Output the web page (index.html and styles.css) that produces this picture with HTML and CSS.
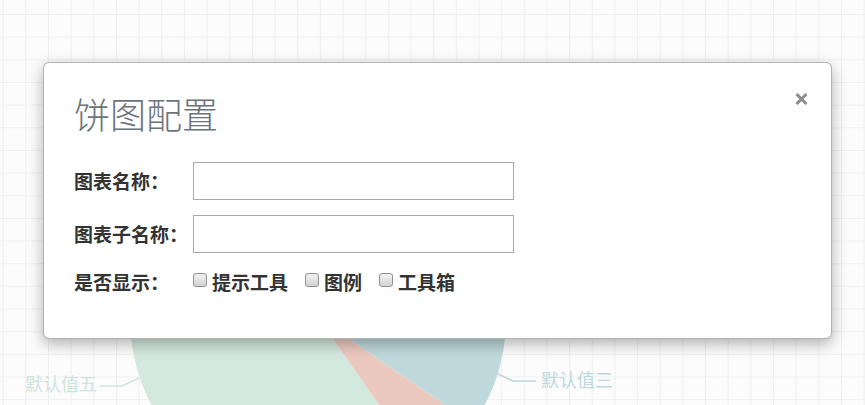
FILE: index.html
```html
<!DOCTYPE html>
<html lang="zh-CN">
<head>
    <meta charset="UTF-8">
    <meta name="viewport" content="width=device-width, initial-scale=1.0">
    <title>饼图配置</title>
    <link rel="stylesheet" href="styles.css">
</head>
<body>
    <div class="page">
        <!-- 背景中的饼图 -->
        <svg class="chart" width="865" height="405" viewBox="0 0 865 405">
            <path class="slice-blue" d="M318,318 L506,318 A188,188 0 0,1 473.2,424.1 Z"/>
            <path class="slice-red" d="M318,318 L473.2,424.1 A188,188 0 0,1 426,471.9 Z"/>
            <path class="slice-green" d="M318,318 L426,471.9 A188,188 0 1,1 311.4,130.1 Z"/>
            <path class="slice-other" d="M318,318 L311.4,130.1 A188,188 0 0,1 506,318 Z"/>
            <polyline class="line-green" points="139,378 122,386 100,386"/>
            <polyline class="line-blue" points="496,373 513,381 536,381"/>
            <text class="label-green" x="97" y="391" text-anchor="end">默认值五</text>
            <text class="label-blue" x="541" y="387">默认值三</text>
        </svg>

        <div class="modal">
            <div class="modal-header">
                <h3 class="modal-title">饼图配置</h3>
                <button class="close" type="button" aria-label="关闭">
                    <svg width="13" height="12" viewBox="0 0 13 12">
                        <path d="M1.5,1 L11.5,11 M11.5,1 L1.5,11"/>
                    </svg>
                </button>
            </div>
            <form class="modal-body" action="#">
                <div class="row">
                    <label class="label" for="title">图表名称：</label>
                    <input class="field" type="text" id="title">
                </div>
                <div class="row">
                    <label class="label" for="subtitle">图表子名称：</label>
                    <input class="field" type="text" id="subtitle">
                </div>
                <div class="row row-check">
                    <span class="label">是否显示：</span>
                    <label class="check"><input type="checkbox"><span>提示工具</span></label>
                    <label class="check"><input type="checkbox"><span>图例</span></label>
                    <label class="check"><input type="checkbox"><span>工具箱</span></label>
                </div>
            </form>
        </div>
    </div>
</body>
</html>
```

FILE: styles.css
```css
* {
    box-sizing: border-box;
    margin: 0;
}
body {
    width: 865px;
    height: 405px;
    overflow: hidden;
    background-color: #fcfcfc;
    background-image:
        linear-gradient(to right, #efefef 1px, transparent 1px),
        linear-gradient(to bottom, #efefef 1px, transparent 1px);
    background-size: 22.67px 22.67px;
    background-position: 2.7px 14px;
    font-family: "Noto Sans CJK SC", "Liberation Sans", sans-serif;
}
.page {
    position: relative;
    height: 405px;
}
.chart {
    display: block;
}
.slice-blue { fill: #bfd9dc; }
.slice-red { fill: #ecc9bf; }
.slice-green { fill: #d3e8df; }
.slice-other { fill: #d8dfe3; }
.line-green,
.line-blue {
    fill: none;
    stroke-width: 1.5;
}
.line-green { stroke: #cfe6dc; }
.line-blue { stroke: #bcd8dc; }
.label-green,
.label-blue {
    font-family: "Noto Sans CJK SC", sans-serif;
    font-size: 18px;
}
.label-green { fill: #cde5db; }
.label-blue { fill: #bcd9dc; }

/* 弹窗 */
.modal {
    position: absolute;
    left: 43px;
    top: 62px;
    width: 789px;
    height: 277px;
    background: #fff;
    border: 1px solid rgba(0, 0, 0, .3);
    border-radius: 6px;
    box-shadow: 0 5px 15px rgba(0, 0, 0, .3);
}
.modal-header {
    display: flex;
    justify-content: space-between;
    align-items: flex-start;
    padding: 30px 23px 0 30px;
}
.modal-title {
    font-size: 36px;
    line-height: 40px;
    font-weight: 300;
    color: #6c737a;
}
.close {
    display: block;
    padding: 0;
    border: 0;
    background: none;
    cursor: pointer;
}
.close svg {
    display: block;
}
.close path {
    stroke: #8c8c8c;
    stroke-width: 3;
    fill: none;
}
.modal-body {
    display: flex;
    flex-direction: column;
    gap: 15px;
    padding: 29px 30px 0;
}
.row {
    display: flex;
    align-items: center;
}
.label {
    width: 119px;
    flex-shrink: 0;
    font-size: 19px;
    line-height: 24px;
    font-weight: bold;
    color: #333;
}
.field {
    width: 321px;
    height: 38px;
    padding: 5px 8px;
    border: 1px solid #a9a9a9;
    border-radius: 0;
    font-size: 16px;
}
.row-check {
    margin-top: 2px;
}
.check {
    display: inline-flex;
    align-items: center;
    margin-right: 17px;
    font-size: 19px;
    line-height: 24px;
    font-weight: bold;
    color: #333;
}
.check input {
    appearance: none;
    width: 14px;
    height: 14px;
    margin: 0 5px 4px 0;
    border: 1px solid #8f8f8f;
    border-radius: 3px;
    background: linear-gradient(#f2f2f2, #d4d4d4);
}
```
